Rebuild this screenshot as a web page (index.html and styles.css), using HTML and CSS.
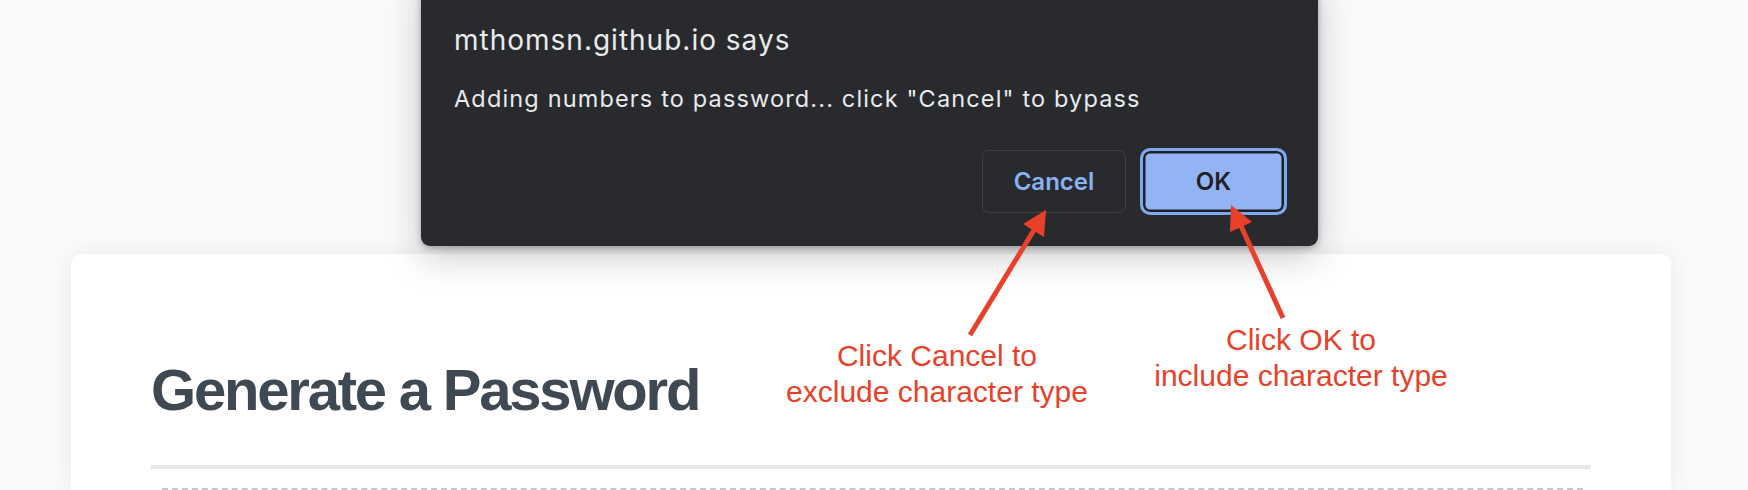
FILE: index.html
```html
<!DOCTYPE html>
<html lang="en">
<head>
<meta charset="utf-8">
<title>Password Generator</title>
<link rel="stylesheet" href="styles.css">
</head>
<body>
<main class="page">
  <section class="card">
    <h1 class="card-title">Generate a Password</h1>
    <hr class="card-rule">
    <div class="password-box"></div>
  </section>
</main>

<div class="dialog" role="dialog">
  <div class="dialog-title">mthomsn.github.io says</div>
  <div class="dialog-message">Adding numbers to password... click "Cancel" to bypass</div>
  <div class="dialog-actions">
    <button class="btn btn-cancel">Cancel</button>
    <button class="btn btn-ok">OK</button>
  </div>
</div>

<svg class="arrows" width="1748" height="490" viewBox="0 0 1748 490">
  <line x1="970" y1="335" x2="1034" y2="230" stroke="#e8412b" stroke-width="5"/>
  <polygon points="1046,210 1044,237 1023,224" fill="#e8412b"/>
  <line x1="1283" y1="318" x2="1241" y2="226" stroke="#e8412b" stroke-width="5"/>
  <polygon points="1231,205 1252,222 1230,232" fill="#e8412b"/>
</svg>

<div class="note note-cancel">Click Cancel to<br>exclude character type</div>
<div class="note note-ok">Click OK to<br>include character type</div>
</body>
</html>
```

FILE: styles.css
```css
* { box-sizing: border-box; }

html, body {
  margin: 0;
  padding: 0;
  background: #f9fafb;
  overflow: hidden;
}

body {
  width: 1748px;
  height: 490px;
  position: relative;
  font-family: "Liberation Sans", Arial, sans-serif;
}

.page {
  padding-top: 254px;
  padding-left: 71px;
}

.card {
  width: 1600px;
  height: 236px;
  overflow: hidden;
  background: #ffffff;
  border-radius: 10px 10px 0 0;
  box-shadow: 0 0 26px rgba(0, 0, 0, 0.07);
  padding: 107px 80px 0 80px;
}

.card-title {
  margin: 0;
  font-family: "Liberation Sans", Arial, sans-serif;
  font-weight: 700;
  font-size: 58px;
  line-height: 58px;
  letter-spacing: -2.2px;
  color: #3e4954;
}

.card-rule {
  margin: 46px 0 0 0;
  border: 0;
  height: 4px;
  background: #e7e7e8;
}

.password-box {
  margin: 19px 8px 0 11px;
  height: 120px;
  border: 2px dashed #c8c8c9;
}

.dialog {
  position: absolute;
  top: -20px;
  left: 421px;
  width: 897px;
  padding: 43px 31px 31px 33px;
  background: #292a2d;
  border-radius: 0 0 9px 9px;
  box-shadow: 0 10px 36px rgba(0, 0, 0, 0.22), 0 2px 6px rgba(0, 0, 0, 0.28);
  font-family: Inter, "Noto Sans", sans-serif;
  color: #e8eaed;
}

.dialog-title {
  font-size: 28px;
  line-height: 34px;
  font-weight: 400;
  letter-spacing: 1px;
}

.dialog-message {
  margin-top: 28px;
  font-size: 23.5px;
  line-height: 28px;
  letter-spacing: 1.15px;
}

.dialog-actions {
  margin-top: 35px;
  display: flex;
  justify-content: flex-end;
  align-items: center;
  gap: 14px;
}

.btn {
  font-family: Inter, "Noto Sans", sans-serif;
  font-size: 24px;
  font-weight: 600;
  display: flex;
  align-items: center;
  justify-content: center;
  padding: 0;
  cursor: pointer;
}

.btn-cancel {
  width: 144px;
  height: 63px;
  background: #292a2d;
  color: #8ab2f2;
  border: 1.5px solid #3e4044;
  border-radius: 7px;
}

.btn-ok {
  width: 147px;
  height: 67px;
  background: #92b4f4;
  color: #202124;
  border: 3.5px solid #7ea8f2;
  border-radius: 10px;
  box-shadow: inset 0 0 0 2.5px #202124;
}

.arrows {
  position: absolute;
  top: 0;
  left: 0;
  pointer-events: none;
}

.note {
  position: absolute;
  width: 360px;
  text-align: center;
  font-family: "Liberation Sans", Arial, sans-serif;
  font-size: 30px;
  line-height: 36px;
  color: #e8412b;
}

.note-cancel {
  top: 338px;
  left: 757px;
}

.note-ok {
  top: 322px;
  left: 1121px;
}
```
